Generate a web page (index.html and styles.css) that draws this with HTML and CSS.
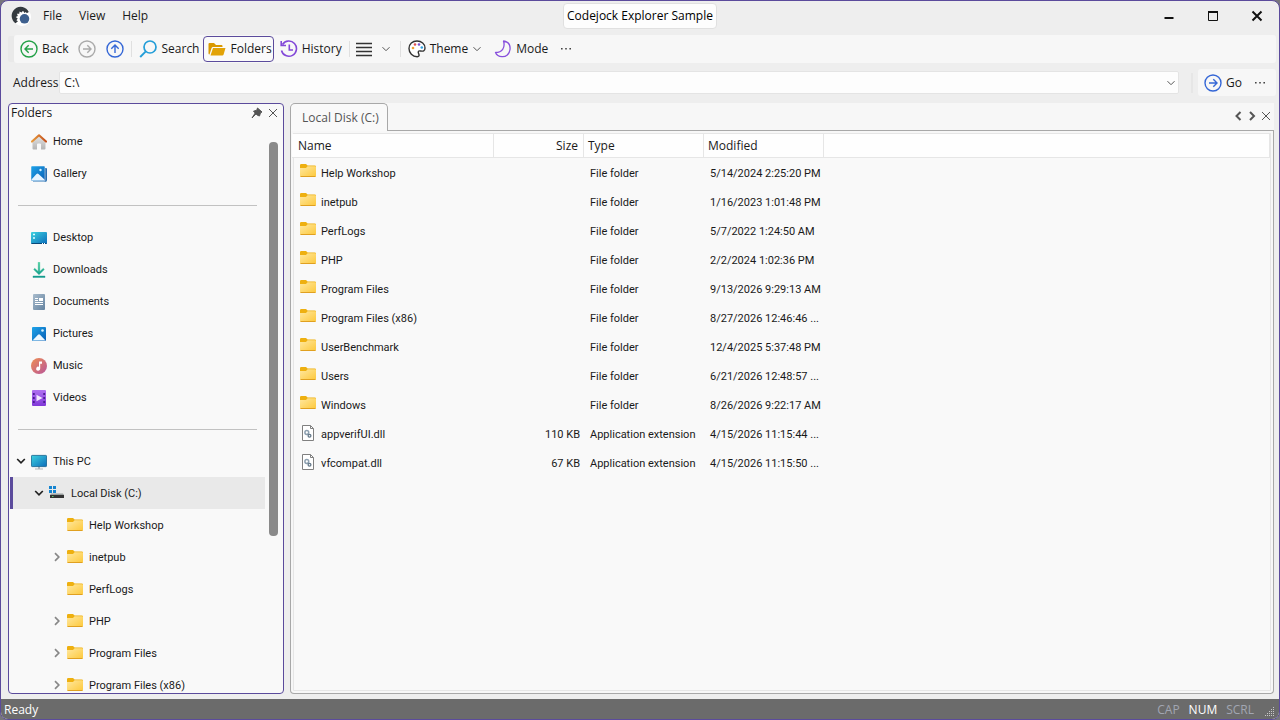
FILE: index.html
```html
<!DOCTYPE html>
<html lang="en">
<head>
<meta charset="utf-8">
<title>Codejock Explorer Sample</title>
<link rel="stylesheet" href="styles.css">
</head>
<body>
<svg class="sprite" aria-hidden="true">
  <defs>
    <linearGradient id="gFolder" x1="0" y1="0" x2="1" y2="1"><stop offset="0" stop-color="#ffe8a0"/><stop offset="1" stop-color="#fdc83a"/></linearGradient>
    <linearGradient id="gRoof" x1="0" y1="0" x2="1" y2="0"><stop offset="0" stop-color="#e89a3c"/><stop offset="1" stop-color="#c4501c"/></linearGradient>
    <linearGradient id="gWall" x1="0" y1="0" x2="0" y2="1"><stop offset="0" stop-color="#e4e4e4"/><stop offset="1" stop-color="#b4b4b4"/></linearGradient>
    <linearGradient id="gBlue" x1="0" y1="0" x2="1" y2="1"><stop offset="0" stop-color="#1ea4ea"/><stop offset="1" stop-color="#0a5fb4"/></linearGradient>
    <linearGradient id="gTeal" x1="0" y1="0" x2="1" y2="1"><stop offset="0" stop-color="#3cd2e0"/><stop offset="1" stop-color="#0c6cba"/></linearGradient>
    <linearGradient id="gDown" x1="0" y1="0" x2="0" y2="1"><stop offset="0" stop-color="#3ecb98"/><stop offset="1" stop-color="#12988c"/></linearGradient>
    <linearGradient id="gDoc" x1="0" y1="0" x2="1" y2="1"><stop offset="0" stop-color="#a9bccd"/><stop offset="1" stop-color="#6483a0"/></linearGradient>
    <linearGradient id="gMusic" x1="0" y1="0" x2="1" y2="1"><stop offset="0" stop-color="#ef8f52"/><stop offset="1" stop-color="#b8559a"/></linearGradient>
    <linearGradient id="gVideo" x1="0" y1="0" x2="0" y2="1"><stop offset="0" stop-color="#b070f0"/><stop offset="1" stop-color="#8038d8"/></linearGradient>
  </defs>
  <symbol id="folder" viewBox="0 2 16 16">
    <path d="M0 3.2Q0 2 1.2 2H6l1.600 1.500H14.800Q16 3.500 16 4.700V7H0Z" fill="#eeb010"/>
    <path d="M0 6H6l1.600-1.800H15Q16 4.200 16 5.200V13.500Q16 15 14.500 15H1.500Q0 15 0 13.500Z" fill="url(#gFolder)"/>
    <path d="M.5 14.500H15.500" stroke="#e0a020"/>
  </symbol>
  <symbol id="home" viewBox="0 0 16 16">
    <path d="M1.500 7.500L8 2l6.500 5.500V14.500q0 1-1 1H10V10.500q0-1-1-1H7q-1 0-1 1V15.500H2.500q-1 0-1-1Z" fill="url(#gWall)"/>
    <path d="M1 7.500L8 1.300L15 7.500" fill="none" stroke="url(#gRoof)" stroke-width="2.200" stroke-linecap="round" stroke-linejoin="round"/>
  </symbol>
  <symbol id="gallery" viewBox="0 0 16 16">
    <path d="M14 2h1q1 0 1 1V14q0 2-2 2H3q-1 0-1-1Z" fill="#2a6dae"/>
    <path d="M2 14.500H14.500V16H3Q2 16 2 14.500" fill="#6fa0cc"/>
    <rect width="14" height="15" rx="1" fill="url(#gBlue)" stroke="#f9f9f9" stroke-width=".5"/>
    <path d="M.5 13.500L5.500 8q1-1 2 0L13.500 13.500V14.500H.5Z" fill="#e6f4ff"/><circle cx="9.500" cy="4" r="1.200" fill="#d8f2ff"/>
  </symbol>
  <symbol id="desktop" viewBox="0 0 16 16">
    <rect y="2" width="16" height="12" rx="1" fill="url(#gTeal)"/><path d="M.5 13.500H15.500" stroke="#084878"/>
    <path d="M2 4.500H4M2 8H4" stroke="#dff" stroke-width="1.500"/><path d="M11 13.500H12M13 13.500H14" stroke="#fff"/>
  </symbol>
  <symbol id="downloads" viewBox="0 0 16 16"><path d="M7.200.2H8.800V9.500L12.300 6.300L13.300 7.600L8 12.700L2.700 7.600L3.700 6.300L7.200 9.500ZM2 14H14V15.600H2Z" fill="url(#gDown)" stroke="url(#gDown)" stroke-width=".4"/></symbol>
  <symbol id="documents" viewBox="0 0 16 16"><rect x="2" width="12" height="16" rx="1" fill="url(#gDoc)"/><path d="M4 4.500H7M4 6.500H7M4 8.500H12M4 10.500H12" stroke="#fff"/><rect x="8" y="4" width="4" height="3" fill="#fff"/></symbol>
  <symbol id="pictures" viewBox="0 0 16 16"><rect x="1" y="1" width="14" height="14" rx="1" fill="url(#gBlue)"/><path d="M1.500 14.500L7 8.700q1-1 2 0L14.500 14.500Z" fill="#eef8ff"/><circle cx="11.500" cy="4.500" r="1.300" fill="#d8f2ff"/></symbol>
  <symbol id="music" viewBox="0 0 16 16"><circle cx="8" cy="8" r="8" fill="url(#gMusic)"/><path d="M8 3.500H11V5.800H9.200V10.500A2 2 0 1 1 8 8.800Z" fill="#fff"/></symbol>
  <symbol id="videos" viewBox="0 0 16 16"><rect x="1" width="14" height="16" rx="1" fill="url(#gVideo)"/><path d="M5.500 4.800L11.500 8L5.500 11.200Z" fill="#f4e8ff"/><path d="M2.800 3V14M13.200 3V14" stroke="#4c1b94" stroke-width="1.800" stroke-dasharray="2 2"/></symbol>
  <symbol id="pc" viewBox="0 0 16 16"><path d="M7 12.500H9V14.500H12V15.500H4V14.500H7Z" fill="#b4b8bc"/><rect x=".4" y="1.400" width="15.200" height="11.200" rx=".8" fill="url(#gTeal)" stroke="#0e5e8c" stroke-width=".8"/></symbol>
  <symbol id="drive" viewBox="0 0 16 16"><path d="M0 0H3V3H0ZM4 0H7V3H4ZM0 4H3V7H0ZM4 4H7V7H4Z" fill="#1484d0"/><path d="M2 7.500H14L15 9H1Z" fill="#9aa0a0"/><rect x="1" y="9" width="14" height="3" fill="#333"/><rect x="3" y="10" width="1.500" height="1" fill="#5fd070"/></symbol>
  <symbol id="dll" viewBox="0 0 16 16"><path d="M2.500.5H10.500L13.500 3.500V15.500H2.500Z" fill="#fff" stroke="#808080"/><path d="M10.500.5V3.500H13.500" fill="none" stroke="#808080"/><circle cx="6.800" cy="7.500" r="1.900" fill="none" stroke="#8da0b0" stroke-width="1.500"/><circle cx="9.500" cy="10.800" r="1.400" fill="none" stroke="#65798a" stroke-width="1.300"/></symbol>
  <symbol id="down" viewBox="0 0 10 10"><path d="M1.500 3.200L5 6.700L8.500 3.200" fill="none" stroke="currentColor"/></symbol>
  <symbol id="twist" viewBox="0 0 10 10"><path d="M1.200 3L5 6.800L8.800 3" fill="none" stroke="currentColor" stroke-width="1.700"/></symbol>
  <symbol id="more" viewBox="0 0 12 12"><path d="M1 5H2.600V6.500H1ZM5.200 5H6.800V6.500H5.200ZM9.400 5H11V6.500H9.400Z" fill="#444"/></symbol>
  <symbol id="round" viewBox="0 0 18 18"><circle cx="9" cy="9" r="8" fill="none" stroke="currentColor" stroke-width="1.400"/><path d="M5 9H13M9.300 5.300L13 9L9.300 12.700" fill="none" stroke="currentColor" stroke-width="1.400"/></symbol>
</svg>

<div class="window">
  <header class="titlebar">
    <div class="menu-side">
      <svg class="logo" viewBox="0 0 20 20" aria-hidden="true"><circle cx="11" cy="11" r="9" fill="#fff"/><path d="M4.500 17.200A9 9 0 1 1 17.800 6L15.800 7.200L14.800 6L13.500 7L12 4.800L10.500 6.500L8.600 5.400L8.300 7.700L6 7.700L6.800 10L4.700 11L6.700 12.500L5.400 14.300L7 15.300Z" fill="#343a3f"/><circle cx="13.500" cy="12.800" r="4.800" fill="#3e608e"/></svg>
      <nav class="menu"><button>File</button><button>View</button><button>Help</button></nav>
    </div>
    <h1 class="caption">Codejock Explorer Sample</h1>
    <div class="window-buttons">
      <button aria-label="Minimize"><svg viewBox="0 0 12 12"><path d="M1.500 8H10.500" stroke="#111" stroke-width="2"/></svg></button>
      <button aria-label="Maximize"><svg viewBox="0 0 12 12"><path d="M1.500 1.500H10.500V10.500H1.500Z" fill="none" stroke="#111"/><path d="M1 2H11" stroke="#111" stroke-width="2"/></svg></button>
      <button aria-label="Close"><svg viewBox="0 0 12 12"><path d="M1.500 1.500L10.500 10.500M10.500 1.500L1.500 10.500" stroke="#111" stroke-width="2"/></svg></button>
    </div>
  </header>

  <div class="toolbar" role="toolbar" aria-label="Standard">
    <button class="tool green"><svg class="i18 flip"><use href="#round"/></svg>Back</button>
    <button class="tool gray" aria-label="Forward"><svg class="i18"><use href="#round"/></svg></button>
    <button class="tool blue" aria-label="Up"><svg class="i18 up"><use href="#round"/></svg></button>
    <span class="rule"></span>
    <button class="tool"><svg class="i18" viewBox="0 0 18 18"><circle cx="11" cy="7" r="6" fill="none" stroke="#249ed8" stroke-width="1.700"/><path d="M6.800 11.300L1.200 17" stroke="#249ed8" stroke-width="1.900"/></svg>Search</button>
    <button class="tool checked" aria-pressed="true"><svg class="i18" viewBox="0 0 18 18"><path d="M.5 13.500V4Q.5 3 1.500 3H6L8 5H13.500Q14.500 5 14.500 6V7H5Q4 7 3.600 8L1.500 14.500Q.5 14.500.5 13.500Z" fill="#d99800"/><path d="M5 8H17.500L15.600 14.600Q15.300 15.500 14.300 15.500H2.500Z" fill="#e2a308"/></svg>Folders</button>
    <button class="tool"><svg class="i18" viewBox="0 0 18 18" fill="none" stroke="#8348d8" stroke-width="1.600"><path d="M2.500 4.500A7.600 7.600 0 1 1 1.500 10.500M1.200 1V5.500H6M9.300 4.500V10H13"/></svg>History</button>
    <span class="rule"></span>
    <button class="tool views" aria-label="Views"><svg class="i18" viewBox="0 0 18 18"><path d="M1 3.500H17M1 7.500H17M1 11.500H17M1 15.500H17" stroke="#333" stroke-width="1.300"/></svg><svg class="i10"><use href="#down"/></svg></button>
    <span class="rule"></span>
    <button class="tool theme"><svg class="i18" viewBox="0 0 18 18"><path d="M9 1C4.500 1 1 4 1 8.500S4.500 16.700 9.200 16.700C11 16.700 11.500 15.500 10.800 14.200C9.500 11.500 10.500 10.600 12.500 11C15 11.500 17 11 17 8C17 3.800 13.500 1 9 1Z" fill="#fff" stroke="#333" stroke-width="1.400"/><circle cx="5" cy="8" r="1.300" fill="#f0a030"/><circle cx="7" cy="4.500" r="1.300" fill="#e05050"/><circle cx="11" cy="4.500" r="1.300" fill="#7a50d0"/><circle cx="13.800" cy="7.500" r="1.300" fill="#30a0e0"/></svg>Theme<svg class="i10"><use href="#down"/></svg></button>
    <button class="tool"><svg class="i18" viewBox="0 0 18 18"><path d="M9.500 1C14.500 1.800 16.500 5 16 9.500C15.500 14 12 17 8 16.700C5 16.500 2.500 15 1.500 12.500C8 12.500 11.500 8 9.500 1Z" fill="none" stroke="#8850dc" stroke-width="1.300" stroke-linejoin="round"/></svg>Mode</button>
    <button class="tool more" aria-label="Toolbar options"><svg class="i12"><use href="#more"/></svg></button>
  </div>

  <div class="address-row">
    <label for="address">Address</label>
    <div class="combo"><input id="address" type="text" value="C:\"><button aria-label="Show addresses"><svg class="i10"><use href="#down"/></svg></button></div>
    <span class="rule"></span>
    <div class="go-bar">
      <button class="tool blue"><svg class="i18"><use href="#round"/></svg>Go</button>
      <button class="tool" aria-label="Address options"><svg class="i12"><use href="#more"/></svg></button>
    </div>
  </div>

  <main class="panes">
    <aside class="folders">
      <div class="pane-title"><h2>Folders</h2>
        <button aria-label="Pin"><svg class="i12" viewBox="0 0 12 12"><path d="M6.500 1L11 5L9.500 5.800L8.500 9L6.500 8.300L5 6.900L1 11L4.200 6L2.500 4.200L5.800 3.200Z" fill="#555" stroke="#555"/></svg></button>
        <button aria-label="Close folders"><svg class="i12" viewBox="0 0 12 12"><path d="M2 2L10 10M10 2L2 10" stroke="#555"/></svg></button>
      </div>
      <div class="tree-area">
        <ul class="tree" role="tree">
          <li class="l0" role="treeitem"><svg class="i16"><use href="#home"/></svg>Home</li>
          <li class="l0" role="treeitem"><svg class="i16"><use href="#gallery"/></svg>Gallery</li>
          <li class="divider" role="separator"></li>
          <li class="l0" role="treeitem"><svg class="i16"><use href="#desktop"/></svg>Desktop</li>
          <li class="l0" role="treeitem"><svg class="i16"><use href="#downloads"/></svg>Downloads</li>
          <li class="l0" role="treeitem"><svg class="i16"><use href="#documents"/></svg>Documents</li>
          <li class="l0" role="treeitem"><svg class="i16"><use href="#pictures"/></svg>Pictures</li>
          <li class="l0" role="treeitem"><svg class="i16"><use href="#music"/></svg>Music</li>
          <li class="l0" role="treeitem"><svg class="i16"><use href="#videos"/></svg>Videos</li>
          <li class="divider" role="separator"></li>
          <li class="l0" role="treeitem" aria-expanded="true"><button class="twisty open" aria-label="Collapse"><svg class="i10"><use href="#twist"/></svg></button><svg class="i16"><use href="#pc"/></svg>This PC</li>
          <li class="l1 selected" role="treeitem" aria-expanded="true" aria-selected="true"><button class="twisty open" aria-label="Collapse"><svg class="i10"><use href="#twist"/></svg></button><svg class="i16"><use href="#drive"/></svg>Local Disk (C:)</li>
          <li class="l2" role="treeitem"><svg class="i16"><use href="#folder"/></svg>Help Workshop</li>
          <li class="l2" role="treeitem" aria-expanded="false"><button class="twisty" aria-label="Expand"><svg class="i10"><use href="#twist"/></svg></button><svg class="i16"><use href="#folder"/></svg>inetpub</li>
          <li class="l2" role="treeitem"><svg class="i16"><use href="#folder"/></svg>PerfLogs</li>
          <li class="l2" role="treeitem" aria-expanded="false"><button class="twisty" aria-label="Expand"><svg class="i10"><use href="#twist"/></svg></button><svg class="i16"><use href="#folder"/></svg>PHP</li>
          <li class="l2" role="treeitem" aria-expanded="false"><button class="twisty" aria-label="Expand"><svg class="i10"><use href="#twist"/></svg></button><svg class="i16"><use href="#folder"/></svg>Program Files</li>
          <li class="l2" role="treeitem" aria-expanded="false"><button class="twisty" aria-label="Expand"><svg class="i10"><use href="#twist"/></svg></button><svg class="i16"><use href="#folder"/></svg>Program Files (x86)</li>
        </ul>
        <div class="scrollbar"><div class="thumb"></div></div>
      </div>
    </aside>

    <section class="content">
      <div class="tabs">
        <button class="tab" role="tab" aria-selected="true">Local Disk (C:)</button>
        <div class="tab-nav">
          <button aria-label="Previous tab"><svg class="i12" viewBox="0 0 12 12"><path d="M8.500 2L4.500 6L8.500 10" fill="none" stroke="#555" stroke-width="2"/></svg></button>
          <button aria-label="Next tab"><svg class="i12" viewBox="0 0 12 12"><path d="M4 2L8 6L4 10" fill="none" stroke="#555" stroke-width="2"/></svg></button>
          <button aria-label="Close tab"><svg class="i12" viewBox="0 0 12 12"><path d="M2 2L10 10M10 2L2 10" stroke="#555"/></svg></button>
        </div>
      </div>
      <div class="list">
        <table>
          <colgroup><col class="c-name"><col class="c-size"><col class="c-type"><col class="c-date"><col></colgroup>
          <thead><tr><th>Name</th><th class="size">Size</th><th>Type</th><th>Modified</th><th></th></tr></thead>
          <tbody>
            <tr><td><svg class="i16"><use href="#folder"/></svg>Help Workshop</td><td></td><td>File folder</td><td>5/14/2024 2:25:20 PM</td><td></td></tr>
            <tr><td><svg class="i16"><use href="#folder"/></svg>inetpub</td><td></td><td>File folder</td><td>1/16/2023 1:01:48 PM</td><td></td></tr>
            <tr><td><svg class="i16"><use href="#folder"/></svg>PerfLogs</td><td></td><td>File folder</td><td>5/7/2022 1:24:50 AM</td><td></td></tr>
            <tr><td><svg class="i16"><use href="#folder"/></svg>PHP</td><td></td><td>File folder</td><td>2/2/2024 1:02:36 PM</td><td></td></tr>
            <tr><td><svg class="i16"><use href="#folder"/></svg>Program Files</td><td></td><td>File folder</td><td>9/13/2026 9:29:13 AM</td><td></td></tr>
            <tr><td><svg class="i16"><use href="#folder"/></svg>Program Files (x86)</td><td></td><td>File folder</td><td>8/27/2026 12:46:46 ...</td><td></td></tr>
            <tr><td><svg class="i16"><use href="#folder"/></svg>UserBenchmark</td><td></td><td>File folder</td><td>12/4/2025 5:37:48 PM</td><td></td></tr>
            <tr><td><svg class="i16"><use href="#folder"/></svg>Users</td><td></td><td>File folder</td><td>6/21/2026 12:48:57 ...</td><td></td></tr>
            <tr><td><svg class="i16"><use href="#folder"/></svg>Windows</td><td></td><td>File folder</td><td>8/26/2026 9:22:17 AM</td><td></td></tr>
            <tr><td><svg class="i16"><use href="#dll"/></svg>appverifUI.dll</td><td class="size">110 KB</td><td>Application extension</td><td>4/15/2026 11:15:44 ...</td><td></td></tr>
            <tr><td><svg class="i16"><use href="#dll"/></svg>vfcompat.dll</td><td class="size">67 KB</td><td>Application extension</td><td>4/15/2026 11:15:50 ...</td><td></td></tr>
          </tbody>
        </table>
      </div>
    </section>
  </main>

  <footer class="status">
    <span class="ready">Ready</span><span class="off">CAP</span><span>NUM</span><span class="off">SCRL</span>
    <svg class="grip" viewBox="0 0 10 10" aria-hidden="true"><path d="M8 0H9V1H8ZM8 2H9V3H8ZM6 2H7V3H6ZM8 4H9V5H8ZM6 4H7V5H6ZM4 4H5V5H4ZM8 6H9V7H8ZM6 6H7V7H6ZM4 6H5V7H4ZM2 6H3V7H2ZM8 8H9V9H8ZM6 8H7V9H6ZM4 8H5V9H4ZM2 8H3V9H2ZM0 8H1V9H0Z" fill="#c8c8c8"/></svg>
  </footer>
</div>
</body>
</html>
```
FILE: styles.css
```css
* { box-sizing: border-box; }
body { margin: 0; background: #77767c; font: 12px/16px "Open Sans", "Noto Sans", sans-serif; color: #1a1a1a; }
button { font: inherit; color: inherit; background: none; border: 0; padding: 0; display: flex; align-items: center; justify-content: center; }
h1, h2 { margin: 0; font: inherit; }
svg { flex: none; display: block; }
.sprite { position: absolute; width: 0; height: 0; }
.i18 { width: 18px; height: 18px; }
.i16 { width: 16px; height: 16px; }
.i12 { width: 12px; height: 12px; }
.i10 { width: 10px; height: 10px; color: #555; }
.flip { transform: rotate(180deg); }
.up { transform: rotate(-90deg); }

.window { height: 100vh; display: flex; flex-direction: column; overflow: hidden; background: #eee; border: 1px solid #5b4b9c; border-radius: 8px; }

.titlebar { flex: none; height: 34px; display: grid; grid-template-columns: 1fr auto 1fr; align-items: center; padding-bottom: 4px; }
.menu-side { display: flex; align-items: center; padding-left: 10px; }
.logo { width: 20px; height: 20px; }
.menu { display: flex; gap: 17px; padding-left: 12px; }
.caption { padding: 4px 3px; background: #fdfdfd; border: 1px solid #e0e0e0; border-radius: 4px; color: #000; }
.window-buttons { display: flex; justify-content: flex-end; }
.window-buttons button { width: 44px; height: 28px; }
.window-buttons svg { width: 12px; height: 12px; }

.toolbar { flex: none; height: 28px; margin: 0 3px 0 13px; padding-left: 2px; display: flex; align-items: center; background: #f7f7f7; border-radius: 3px; box-shadow: -7px 0 0 -1px #e9e9e9; }
.tool { height: 26px; padding: 0 3px; gap: 4px; border: 1px solid transparent; border-radius: 4px; }
.tool + .tool { margin-left: 2px; }
.tool + .tool.checked { border-color: #5b4b9c; background: #fafafa; padding: 0 1px 0 4px; margin-left: 0; }
.rule { width: 1px; height: 16px; margin: 0 3px; background: #e0e0e0; }
.green svg { color: #24a148; }
.gray svg { color: #aaa; }
.blue svg { color: #3567d6; }
.tool.views { gap: 8px; padding: 0 5px 0 1px; }
.tool.theme { padding-right: 5px; }
.tool.more { padding: 0 5px; }

.address-row { flex: none; display: flex; align-items: center; height: 27px; margin: 6px 3px 0 12px; }
.combo { flex: 1; display: flex; height: 23px; margin-left: 1px; background: #fdfdfd; border: 1px solid #e4e4e4; border-radius: 2px; }
.combo input { flex: 1; min-width: 0; border: 0; padding: 0 4px; background: none; font: inherit; color: inherit; outline: 0; }
.combo button { width: 14px; }
.address-row > .rule { width: 2px; height: 20px; margin: 0 5px 0 12px; background: #e6e6e6; }
.go-bar { display: flex; align-items: center; height: 27px; padding: 0 6px 0 2px; background: #f7f7f7; border-radius: 3px; gap: 2px; }

.panes { flex: 1; min-height: 0; display: grid; grid-template-columns: 276px 1fr; gap: 6px; padding: 7px 5px 5px 7px; }
.folders { min-height: 0; display: flex; flex-direction: column; background: #f9f9f9; border: 1px solid #5b4b9c; border-radius: 4px; overflow: hidden; }
.pane-title { flex: none; height: 21px; padding: 0 2px; display: flex; align-items: center; padding-bottom: 3px; }
.pane-title h2 { flex: 1; }
.pane-title button { width: 16px; height: 16px; }
.tree-area { flex: 1; min-height: 0; display: flex; padding-right: 5px; }
.tree { flex: 1; min-width: 0; margin: 0 4px 0 1px; padding: 0; list-style: none; overflow: hidden; font: 11px/16px Roboto, "Liberation Sans", sans-serif; }
.tree li { height: 32px; display: flex; align-items: center; padding-top: 2px; }
.tree li.divider { padding-top: 0; }
.tree li > svg { margin-right: 6px; }
.tree .l0 { padding-left: 21px; }
.tree .l1 { padding-left: 39px; }
.tree .l2 { padding-left: 57px; }
.tree .twisty { width: 10px; height: 16px; margin: -2px 5px 0 -15px; }
.twisty svg { transform: rotate(-90deg); color: #888; }
.twisty.open svg { transform: none; color: #222; }
.tree .divider::before { content: ""; flex: 1; height: 1px; margin: 0 8px; background: #c2c2c2; }
.tree .selected { background: #e9e9e9; box-shadow: inset 3px 0 #5b4b9c; }
.scrollbar { width: 9px; padding-top: 17px; }
.thumb { height: calc(100% * 5 / 7); background: #8a8a8a; border-radius: 4px; }

.content { min-width: 0; display: flex; flex-direction: column; }
.tabs { flex: none; height: 28px; display: flex; background: linear-gradient(#a8a8a8, #a8a8a8) bottom / 100% 1px no-repeat #f7f7f7; }
.tab { padding: 0 8px 0 11px; background: #f9f9f9; border: 1px solid #a8a8a8; border-bottom: 0; border-radius: 5px 5px 0 0; color: #555; }
.tab-nav { flex: 1; display: flex; justify-content: flex-end; align-items: center; gap: 2px; padding: 0 2px 2px 0; }
.list { flex: 1; min-height: 0; padding: 2px 3px 2px 1px; background: #f9f9f9; border: 1px solid #a8a8a8; border-top: 0; border-radius: 0 0 4px 4px; box-shadow: inset 0 0 0 2px #f7f7f7, inset 0 0 0 3px #e6e6e6; }
table { width: 100%; table-layout: fixed; border-collapse: separate; border-spacing: 0; margin-top: 1px; }
.c-name { width: 202px; }
.c-size { width: 90px; }
.c-type, .c-date { width: 120px; }
th { height: 24px; padding: 0 4px; text-align: left; font-weight: 400; background: #fefefe; border-right: 1px solid #e6e6e6; border-bottom: 1px solid #e6e6e6; }
th:first-child { padding-left: 6px; }
th.size { padding-right: 5px; }
td { height: 29px; padding: 2px 0 0 6px; font: 11px/16px Roboto, "Liberation Sans", sans-serif; white-space: nowrap; }
td:first-child { padding-left: 8px; }
td svg { display: inline-block; vertical-align: middle; margin: -3px 5px 0 0; }
.size { text-align: right; }
td.size { padding: 2px 4px 0 0; }

.status { flex: none; height: 20px; display: flex; align-items: center; gap: 9px; padding: 2px 4px 0 3px; background: #6b6b6b; color: #fff; }
.ready { flex: 1; }
.off { color: #a2a6b2; }
.grip { width: 10px; height: 10px; margin-left: 2px; margin-top: 4px; }
```
